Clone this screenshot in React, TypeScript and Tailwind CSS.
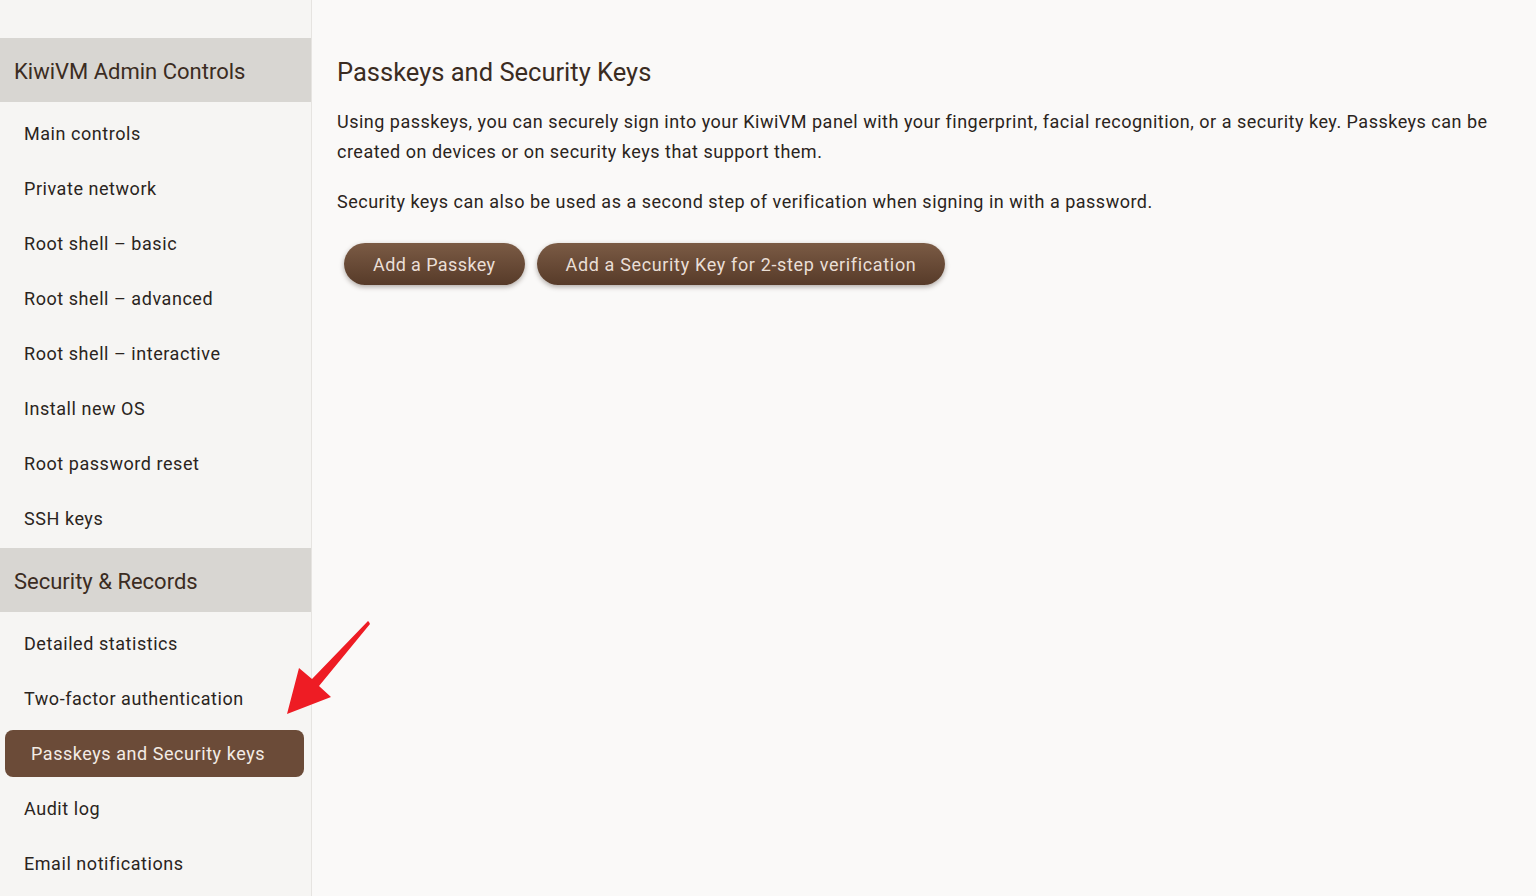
import React from 'react';

type NavItem = { label: string; active?: boolean };

const sections: { title: string; items: NavItem[] }[] = [
    {
        title: 'KiwiVM Admin Controls',
        items: [
            { label: 'Main controls' },
            { label: 'Private network' },
            { label: 'Root shell – basic' },
            { label: 'Root shell – advanced' },
            { label: 'Root shell – interactive' },
            { label: 'Install new OS' },
            { label: 'Root password reset' },
            { label: 'SSH keys' },
        ],
    },
    {
        title: 'Security & Records',
        items: [
            { label: 'Detailed statistics' },
            { label: 'Two-factor authentication' },
            { label: 'Passkeys and Security keys', active: true },
            { label: 'Audit log' },
            { label: 'Email notifications' },
        ],
    },
];

const font = { fontFamily: 'Roboto, "Noto Sans", sans-serif' };

const Sidebar: React.FC = () => (
    <aside className="flex w-[312px] shrink-0 flex-col border-r border-[#e6e4e1] bg-[#f6f5f3] pt-[38px]">
        {sections.map(section => (
            <div key={section.title} className="flex flex-col">
                <div className="flex h-[64px] items-center bg-[#d8d6d2] pl-[14px] pt-[2px] text-[22px] text-[#3b2c22]">
                    {section.title}
                </div>
                <ul className="flex flex-col pb-[2px] pt-[4px]">
                    {section.items.map(item => (
                        <li key={item.label} className="flex h-[55px] items-center pl-[5px] pr-[7px]">
                            {item.active ? (
                                <span className="flex h-[47px] w-full items-center rounded-[8px] bg-[#6b4b38] pl-[26px] text-[18px] tracking-[0.55px] text-[#f3ebe5]">
                                    {item.label}
                                </span>
                            ) : (
                                <span className="pl-[19px] text-[18px] tracking-[0.55px] text-[#2a2420]">{item.label}</span>
                            )}
                        </li>
                    ))}
                </ul>
            </div>
        ))}
    </aside>
);

const PillButton: React.FC<{ children: React.ReactNode; wide?: boolean }> = ({ children, wide }) => (
    <button
        type="button"
        className={`h-[42px] rounded-full bg-gradient-to-b from-[#7b5b45] to-[#573b29] px-[29px] text-[18px] text-[#eadfd6] shadow-[0_2px_5px_rgba(40,25,15,0.35)] ${wide ? 'tracking-[0.65px]' : 'tracking-[0.4px]'}`}
    >
        {children}
    </button>
);

const RedArrow: React.FC = () => (
    <svg className="pointer-events-none absolute left-[284px] top-[618px]" width="90" height="100" viewBox="0 0 90 100">
        <path d="M85 4 L86 6 L35 68 L47 79 L3 96 L15 50 L28 61 L84 3 Z" fill="#ee1c24" />
    </svg>
);

export default function App() {
    return (
        <div className="relative flex h-[896px] w-[1536px] overflow-hidden bg-[#faf9f8]" style={font}>
            <Sidebar />
            <main className="flex-1 pl-[25px] pr-[30px] pt-[54px] text-[#2a2420]">
                <h1 className="text-[25.5px] leading-[36px] text-[#3b2c22]">Passkeys and Security Keys</h1>
                <p className="mt-[17px] text-[18px] leading-[30px] tracking-[0.5px]">
                    Using passkeys, you can securely sign into your KiwiVM panel with your fingerprint, facial recognition, or a security key. Passkeys can be created on devices or on security keys that support them.
                </p>
                <p className="mt-[20px] text-[18px] leading-[30px] tracking-[0.5px]">
                    Security keys can also be used as a second step of verification when signing in with a password.
                </p>
                <div className="mt-[26px] flex gap-[12px] pl-[7px]">
                    <PillButton>Add a Passkey</PillButton>
                    <PillButton wide>Add a Security Key for 2-step verification</PillButton>
                </div>
            </main>
            <RedArrow />
        </div>
    );
}
